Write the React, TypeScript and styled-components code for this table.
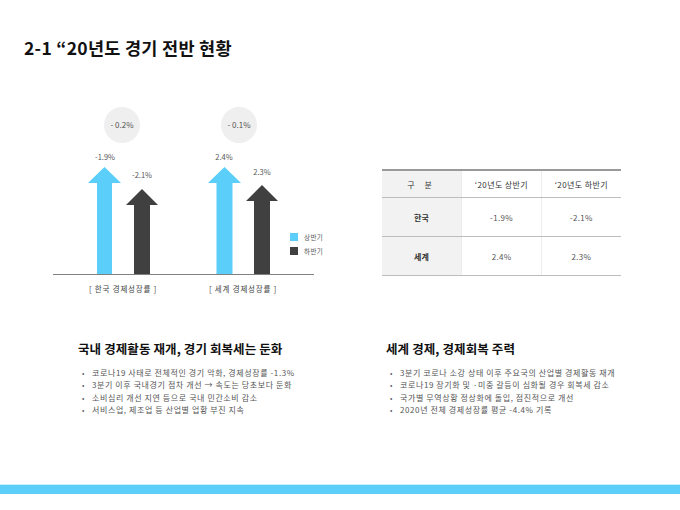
import React from 'react';
import styled, { createGlobalStyle } from 'styled-components';

const GlobalStyle = createGlobalStyle`
  html, body {
    margin: 0;
    padding: 0;
    background: #ffffff;
  }
  body {
    font-family: "Noto Sans CJK KR", "Noto Sans", sans-serif;
  }
`;

const BLUE = '#5bcefa';
const DARK = '#404040';

const Page = styled.div`
  width: 680px;
  height: 510px;
  display: flex;
  flex-direction: column;
  overflow: hidden;
`;

const Title = styled.h1`
  margin: 0;
  padding: 38px 0 0 24px;
  font-size: 17.5px;
  line-height: 20px;
  font-weight: 700;
  color: #111;
  letter-spacing: 0.3px;
`;

const Middle = styled.section`
  display: flex;
  align-items: flex-start;
  margin-top: 42px;
`;

const ChartSvg = styled.svg`
  display: block;
  margin-left: 40px;
  flex: none;
`;

const Table = styled.table`
  margin: 69px 0 0 42px;
  width: 239px;
  border-collapse: collapse;
  border-top: 2px solid #9a9a9a;
  border-bottom: 1px solid #bdbdbd;
  table-layout: fixed;
`;

const HeadCell = styled.th<{ $stub?: boolean }>`
  height: 26px;
  padding: 0;
  font-size: 8px;
  font-weight: 400;
  color: #333;
  text-align: center;
  background: ${({ $stub }) => ($stub ? '#f2f2f2' : '#ffffff')};
  border-bottom: 1px solid #bdbdbd;
  letter-spacing: ${({ $stub }) => ($stub ? '4px' : '0.4px')};
  & + & {
    border-left: 1px solid #ececec;
  }
`;

const Cell = styled.td<{ $stub?: boolean }>`
  height: 38px;
  padding: 0;
  font-size: 8px;
  font-weight: ${({ $stub }) => ($stub ? 700 : 400)};
  color: ${({ $stub }) => ($stub ? '#333' : '#555')};
  text-align: center;
  letter-spacing: 0.3px;
  background: ${({ $stub }) => ($stub ? '#f2f2f2' : '#ffffff')};
  border-bottom: 1px solid #bdbdbd;
  & + & {
    border-left: 1px solid #ececec;
  }
`;

const Bottom = styled.section`
  display: grid;
  grid-template-columns: 308px 1fr;
  margin-top: 41px;
`;

const Column = styled.div<{ $indent: number }>`
  padding-left: ${({ $indent }) => $indent}px;
`;

const Heading = styled.h2`
  margin: 0;
  font-size: 12.5px;
  line-height: 16px;
  font-weight: 700;
  color: #111;
  letter-spacing: 0.1px;
`;

const Bullets = styled.ul`
  list-style: none;
  margin: 10px 0 0;
  padding: 0;
`;

const Bullet = styled.li`
  position: relative;
  padding-left: 14px;
  font-size: 8px;
  line-height: 12.4px;
  letter-spacing: 0.6px;
  color: #555;
  white-space: nowrap;
  &::before {
    content: '•';
    position: absolute;
    left: 4px;
    top: 0;
    color: #666;
    font-size: 7px;
  }
`;

const FooterBar = styled.div`
  margin-top: auto;
  margin-bottom: 16px;
  height: 9px;
  background: ${BLUE};
  box-shadow: 0 -1px 0 #c9effd;
`;

type Arrow = { tip: number; cx: number; half: number; shaft: number; color: string };

const arrowPath = ({ tip, cx, half, shaft }: Arrow, base: number) => {
  const headBase = tip + 16;
  return `M${cx} ${tip} L${cx + half} ${headBase} L${cx + shaft} ${headBase} L${cx + shaft} ${base} L${cx - shaft} ${base} L${cx - shaft} ${headBase} L${cx - half} ${headBase} Z`;
};

const arrows: Arrow[] = [
  { tip: 67, cx: 64.5, half: 16.5, shaft: 7.5, color: BLUE },
  { tip: 89, cx: 102, half: 16, shaft: 8, color: DARK },
  { tip: 67, cx: 184.5, half: 16.5, shaft: 8, color: BLUE },
  { tip: 85, cx: 222, half: 16, shaft: 8, color: DARK },
];

const values = [
  { x: 65, y: 60, t: '-1.9%' },
  { x: 102, y: 78, t: '-2.1%' },
  { x: 184, y: 60, t: '2.4%' },
  { x: 222, y: 75, t: '2.3%' },
];

const GrowthChart: React.FC = () => (
  <ChartSvg width={300} height={200} viewBox="0 0 300 200">
    <g fontFamily='"Noto Sans CJK KR", "Noto Sans", sans-serif'>
      <circle cx={82} cy={25} r={18} fill="#efefef" />
      <circle cx={199} cy={25} r={18} fill="#efefef" />
      <text x={82} y={28} fontSize={8} fill="#555" textAnchor="middle">- 0.2%</text>
      <text x={199} y={28} fontSize={8} fill="#555" textAnchor="middle">- 0.1%</text>

      {values.map((v) => (
        <text key={v.t} x={v.x} y={v.y} fontSize={7.5} fill="#555" textAnchor="middle">
          {v.t}
        </text>
      ))}

      {arrows.map((a, i) => (
        <path key={i} d={arrowPath(a, 174)} fill={a.color} />
      ))}

      <line x1={13} y1={174.5} x2={274} y2={174.5} stroke="#808080" strokeWidth={1.2} />

      <rect x={250} y={133} width={8} height={8} fill={BLUE} />
      <rect x={250} y={147} width={8} height={8} fill={DARK} />
      <text x={264} y={140} fontSize={6.5} fill="#555" letterSpacing={0.4}>상반기</text>
      <text x={264} y={154} fontSize={6.5} fill="#555" letterSpacing={0.4}>하반기</text>

      <text x={83} y={192} fontSize={7.5} fill="#444" textAnchor="middle" letterSpacing={0.8}>[ 한국 경제성장률 ]</text>
      <text x={203} y={192} fontSize={7.5} fill="#444" textAnchor="middle" letterSpacing={0.8}>[ 세계 경제성장률 ]</text>
    </g>
  </ChartSvg>
);

const leftBullets = [
  '코로나19 사태로 전체적인 경기 악화, 경제성장률 -1.3%',
  '3분기 이후 국내경기 점차 개선 → 속도는 당초보다 둔화',
  '소비심리 개선 지연 등으로 국내 민간소비 감소',
  '서비스업, 제조업 등 산업별 업황 부진 지속',
];

const rightBullets = [
  '3분기 코로나 소강 상태 이후 주요국의 산업별 경제활동 재개',
  '코로나19 장기화 및 ·미중 갈등이 심화될 경우 회복세 감소',
  '국가별 무역상황 정상화에 돌입, 점진적으로 개선',
  '2020년 전체 경제성장률 평균 -4.4% 기록',
];

const App: React.FC = () => (
  <Page>
    <GlobalStyle />
    <Title>2-1 “20년도 경기 전반 현황</Title>

    <Middle>
      <GrowthChart />
      <Table>
        <thead>
          <tr>
            <HeadCell $stub>구 분</HeadCell>
            <HeadCell>‘20년도 상반기</HeadCell>
            <HeadCell>‘20년도 하반기</HeadCell>
          </tr>
        </thead>
        <tbody>
          <tr>
            <Cell $stub>한국</Cell>
            <Cell>-1.9%</Cell>
            <Cell>-2.1%</Cell>
          </tr>
          <tr>
            <Cell $stub>세계</Cell>
            <Cell>2.4%</Cell>
            <Cell>2.3%</Cell>
          </tr>
        </tbody>
      </Table>
    </Middle>

    <Bottom>
      <Column $indent={78}>
        <Heading>국내 경제활동 재개, 경기 회복세는 둔화</Heading>
        <Bullets>
          {leftBullets.map((b) => (
            <Bullet key={b}>{b}</Bullet>
          ))}
        </Bullets>
      </Column>
      <Column $indent={78}>
        <Heading>세계 경제, 경제회복 주력</Heading>
        <Bullets>
          {rightBullets.map((b) => (
            <Bullet key={b}>{b}</Bullet>
          ))}
        </Bullets>
      </Column>
    </Bottom>

    <FooterBar />
  </Page>
);

export default App;
